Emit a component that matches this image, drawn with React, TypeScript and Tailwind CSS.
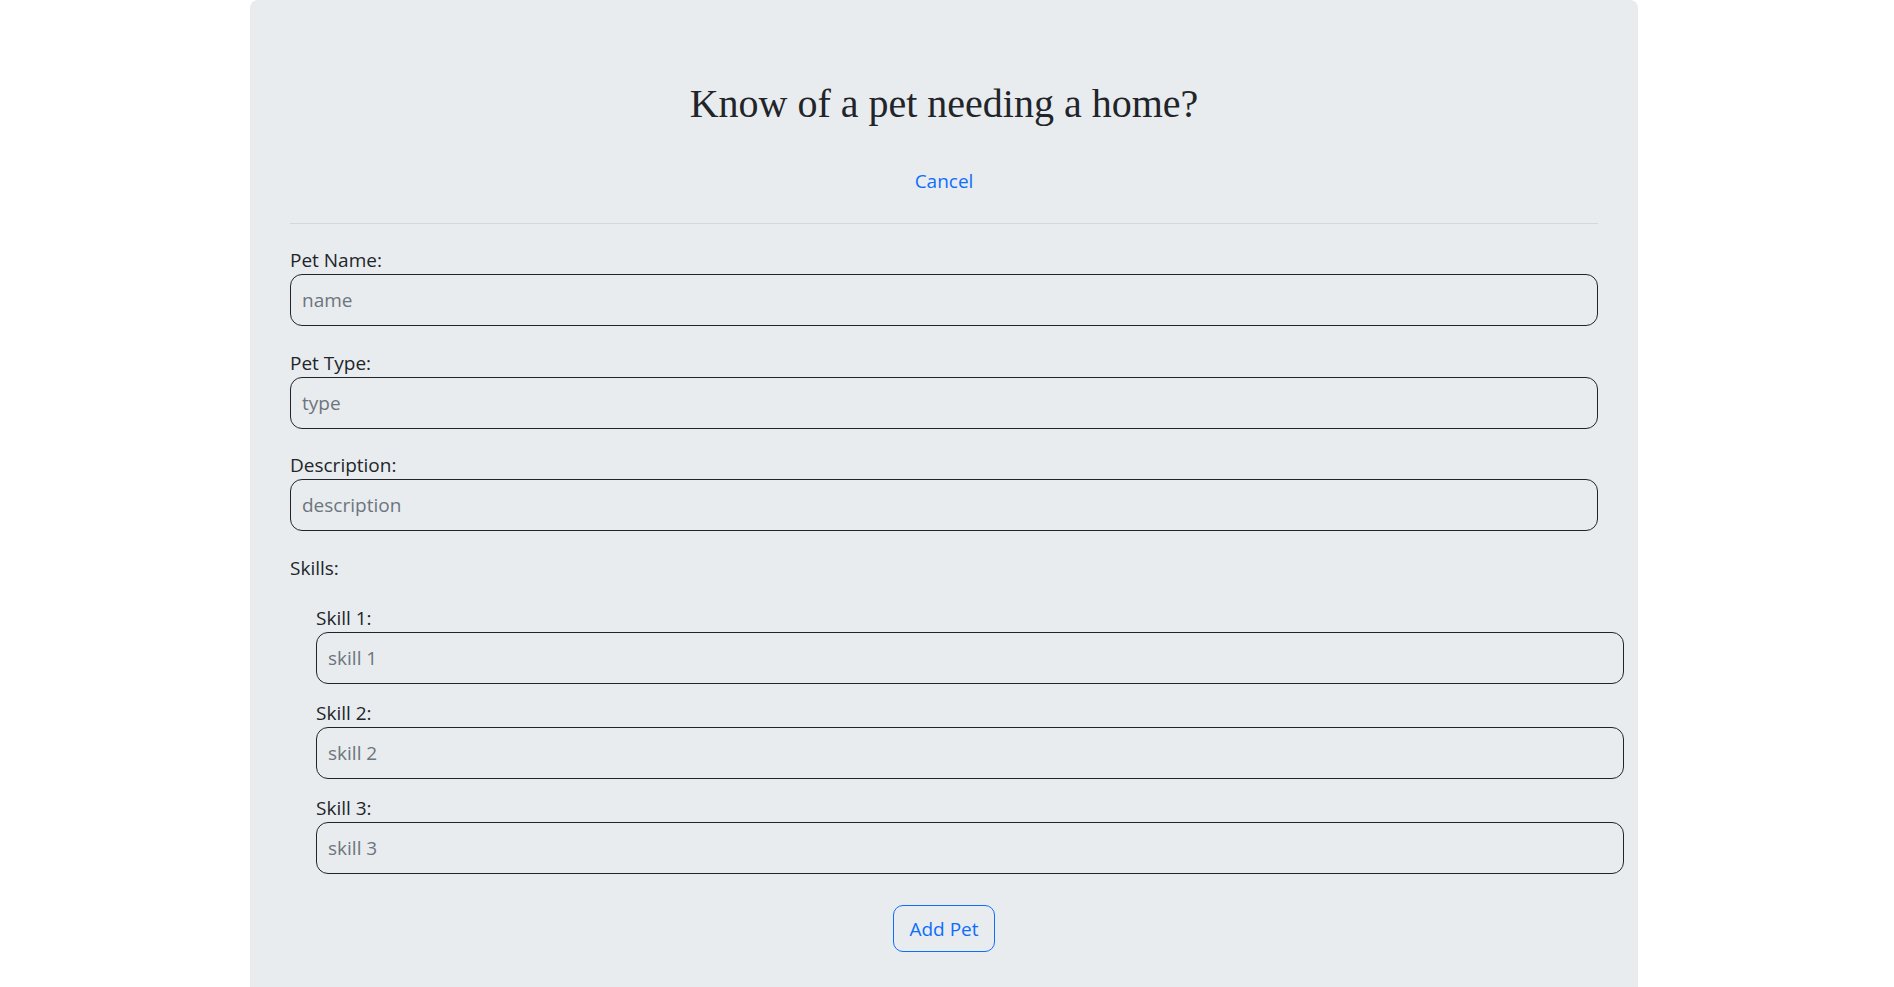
const sans = "font-['Open_Sans','Noto_Sans',sans-serif]";

function Field({ label, placeholder, className = "" }: { label: string; placeholder: string; className?: string }) {
  return (
    <div className={className}>
      <label className="block text-[19px] leading-[30px] text-[#212529]">{label}</label>
      <input
        type="text"
        placeholder={placeholder}
        className="-mt-px block w-full h-[52px] rounded-[12px] border border-[#212529] bg-transparent px-[11px] text-[19px] text-[#212529] placeholder:text-[#6c757d] outline-none"
      />
    </div>
  );
}

export default function App() {
  return (
    <div className={`min-h-screen bg-white ${sans}`}>
      <div className="ml-[250px] w-[1388px] rounded-t-[8px] bg-[#e9ecef] px-[40px] pt-[80px] pb-[40px]">
        {/* Header */}
        <h1 className="text-center font-['Liberation_Serif',serif] text-[40px] leading-[48px] text-[#212529]">
          Know of a pet needing a home?
        </h1>
        <div className="mt-[38px] text-center">
          <a href="#" className="text-[19px] leading-[30px] text-[#0d6efd]">
            Cancel
          </a>
        </div>
        <hr className="mt-[27px] border-t border-[#d3d6da]" />

        {/* Form */}
        <form onSubmit={(e) => e.preventDefault()}>
          <Field className="mt-[21px]" label="Pet Name:" placeholder="name" />
          <Field className="mt-[22px]" label="Pet Type:" placeholder="type" />
          <Field className="mt-[21px]" label="Description:" placeholder="description" />

          <p className="mt-[22px] text-[19px] leading-[30px] text-[#212529]">Skills:</p>
          <div className="ml-[26px] w-full">
            <Field className="mt-[20px]" label="Skill 1:" placeholder="skill 1" />
            <Field className="mt-[14px]" label="Skill 2:" placeholder="skill 2" />
            <Field className="mt-[14px]" label="Skill 3:" placeholder="skill 3" />
          </div>

          <div className="mt-[31px] flex justify-center">
            <button
              type="submit"
              className="h-[47px] rounded-[10px] border border-[#0d6efd] px-[15px] text-[19px] leading-[30px] text-[#0d6efd]"
            >
              Add Pet
            </button>
          </div>
        </form>
      </div>
    </div>
  );
}
